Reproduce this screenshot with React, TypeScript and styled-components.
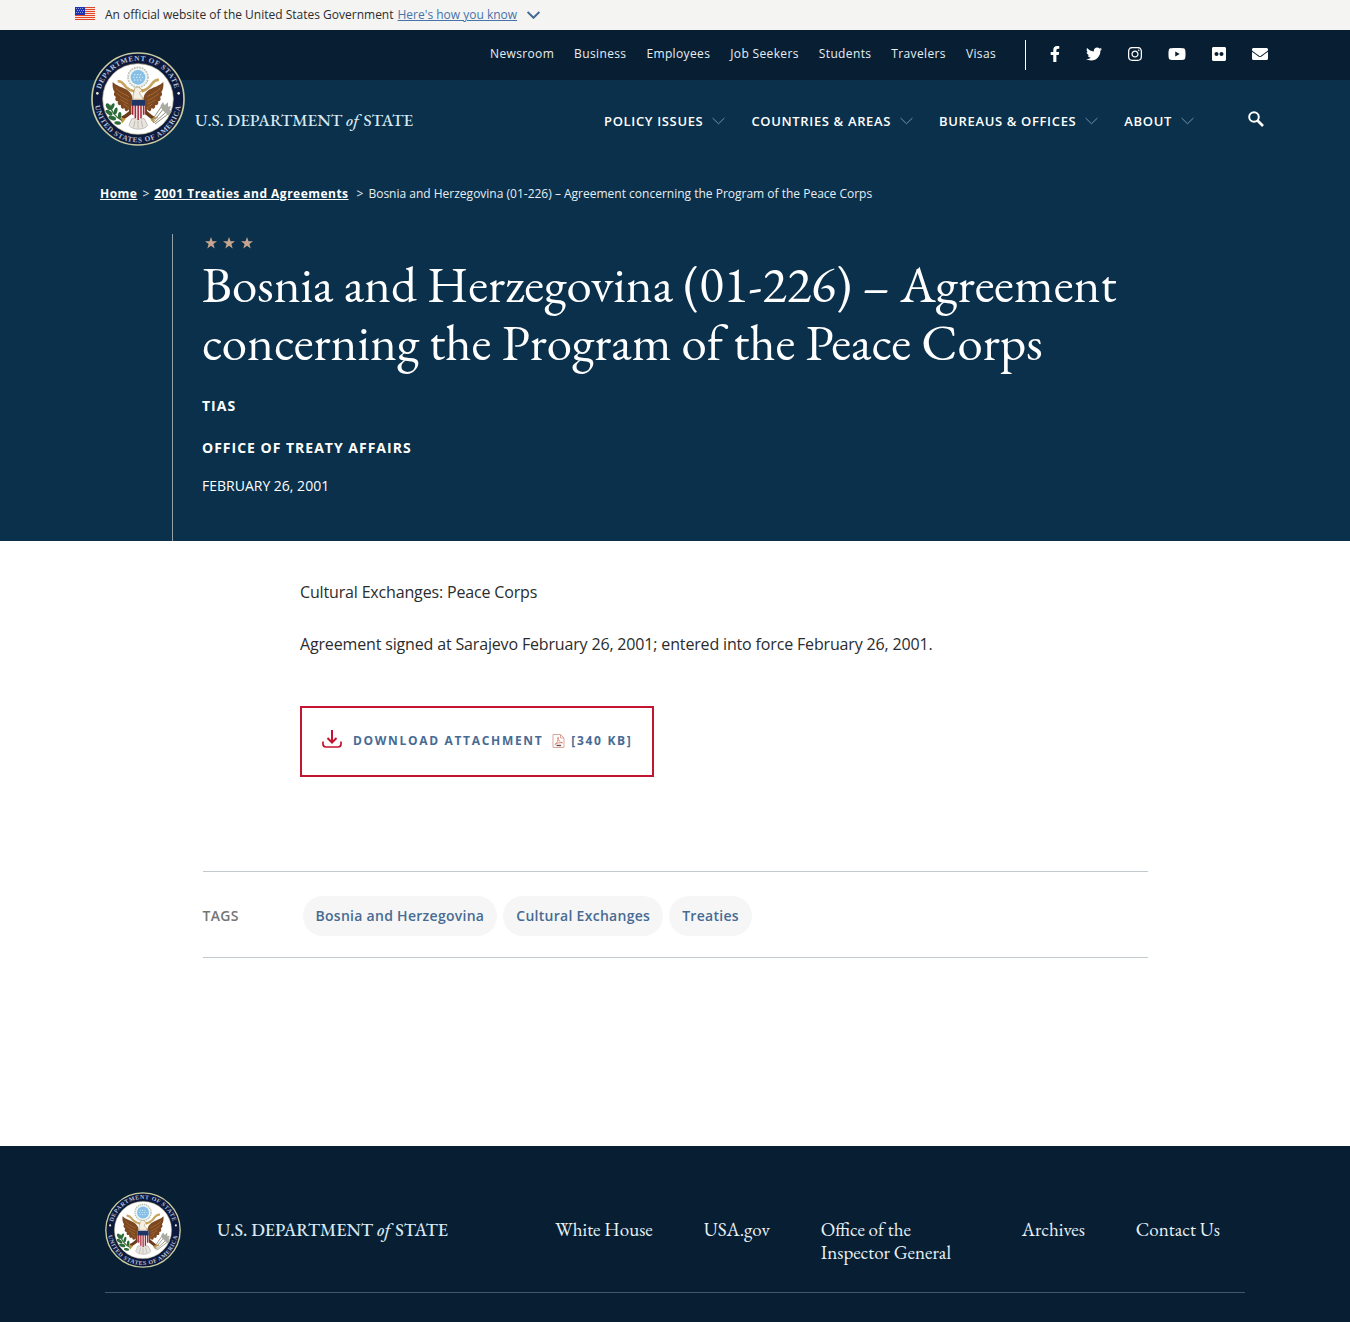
import React from "react";
import styled, { createGlobalStyle } from "styled-components";
import {
  FaEnvelope,
  FaFacebookF,
  FaFlickr,
  FaInstagram,
  FaTwitter,
  FaYoutube,
} from "react-icons/fa";

const color = {
  navy: "#081f33",
  blue: "#0a304b",
  link: "#4773aa",
  steel: "#476b93",
  red: "#c3152f",
  text: "#2a2c2e",
};

const sans = '"Open Sans", "Noto Sans", sans-serif';
const serif = '"EB Garamond", "Liberation Serif", serif';

const GlobalStyle = createGlobalStyle`
  *, *::before, *::after { box-sizing: border-box; }
  body {
    margin: 0;
    background: #fff;
    color: ${color.text};
    font-family: ${sans};
    font-size: 16px;
    line-height: 26px;
  }
  a { color: inherit; text-decoration: none; }
  ul, ol { list-style: none; margin: 0; padding: 0; }
  p, h1 { margin: 0; }
  svg { display: block; flex: none; }
`;

/* Government banner */

const Banner = styled.div`
  display: flex;
  align-items: center;
  height: 30px;
  padding: 0 75px;
  background: #f4f4f3;
  font-size: 12px;
  line-height: 16px;
`;

const FlagBox = styled.span`
  padding-bottom: 3px;
`;

const BannerText = styled.p`
  margin: 0 4px 0 10px;
`;

const BannerToggle = styled.button`
  display: flex;
  align-items: center;
  gap: 10px;
  padding: 0;
  border: 0;
  background: none;
  color: ${color.link};
  font: inherit;
  cursor: pointer;

  span { text-decoration: underline; }
`;

/* Header */

const Header = styled.header`
  display: grid;
  grid-template-columns: auto 1fr;
  grid-template-rows: 50px 82px;
  padding: 0 82px 0 91px;
  background: linear-gradient(${color.navy} 50px, ${color.blue} 50px);
  color: #fff;
`;

const Brand = styled.a`
  grid-row: 1 / 3;
  display: flex;
  align-items: flex-start;
  gap: 10px;
  padding-top: 22px;
`;

const Wordmark = styled.span<{ $size: number }>`
  font-family: ${serif};
  font-size: ${(p) => p.$size}px;
  font-weight: 500;
  line-height: 24px;
  color: #d8e8f2;
  white-space: nowrap;

  em { margin-right: 1px; }
`;

const HeaderWordmark = styled(Wordmark)`
  margin-top: 56px;
`;

const UtilityBar = styled.div`
  display: flex;
  align-items: center;
  justify-content: flex-end;
  font-size: 12px;
  line-height: 16px;
`;

const UtilityNav = styled.ul`
  display: flex;
  gap: 20px;
  margin-right: 29px;
  padding-bottom: 2px;
  letter-spacing: 0.03em;
  color: #e6eef4;
`;

const SocialNav = styled.ul`
  display: flex;
  align-items: center;
  gap: 26px;
  height: 30px;
  padding: 0 0 2px 24px;
  border-left: 1px solid #fff;
`;

const SocialLink = styled.a<{ $width: number }>`
  display: block;

  svg {
    width: ${(p) => p.$width}px;
    height: 16px;
  }
`;

const MainBar = styled.div`
  display: flex;
  align-items: center;
  justify-content: flex-end;
  padding-right: 4px;
`;

const MainNav = styled.ul`
  display: flex;
  gap: 26px;
  margin-right: 54px;
`;

const MenuButton = styled.button`
  display: flex;
  align-items: center;
  gap: 9px;
  padding: 0;
  border: 0;
  background: none;
  color: #fff;
  font-family: ${sans};
  font-size: 13px;
  font-weight: 600;
  line-height: 18px;
  letter-spacing: 0.05em;
  text-transform: uppercase;
  cursor: pointer;
`;

const SearchButton = styled.button`
  padding: 0 0 4px;
  border: 0;
  background: none;
  color: #fff;
  cursor: pointer;
`;

/* Hero */

const Hero = styled.section`
  padding-top: 23px;
  background: ${color.blue};
  color: #fff;
`;

const Crumbs = styled.ol`
  display: flex;
  gap: 5px;
  padding: 0 100px;
  font-size: 12px;
  line-height: 18px;
  color: #e6eef4;

  a {
    color: #fff;
    font-weight: 700;
    letter-spacing: 0.04em;
    text-decoration: underline;
  }
`;

const Crumb = styled.li`
  display: flex;
  gap: 5px;

  & + & { gap: 8px; }
`;

const HeroBody = styled.div`
  margin: 31px 15% 0 172px;
  padding: 2px 0 44px 29px;
  border-left: 1px solid #93a0a5;
`;

const Stars = styled.div`
  display: flex;
  gap: 6px;
  padding: 1px 3px;
  color: #c8a58f;
`;

const Title = styled.h1`
  margin: 5px 0 24px;
  font-family: ${serif};
  font-size: 51px;
  font-weight: 400;
  line-height: 58px;
`;

const Meta = styled.p`
  margin-bottom: 20px;
  font-size: 14px;
  font-weight: 700;
  line-height: 22px;
  letter-spacing: 1px;
  text-transform: uppercase;
`;

const DateLine = styled.p`
  margin-top: -4px;
  font-size: 14px;
  line-height: 22px;
  text-transform: uppercase;
`;

/* Article */

const Article = styled.main`
  padding: 38px 15% 94px 300px;
`;

const Paragraph = styled.p`
  margin-bottom: 26px;
  letter-spacing: -0.01em;
`;

const Download = styled.a`
  display: inline-flex;
  align-items: center;
  margin-top: 23px;
  padding: 19px 20px 21px;
  border: 2px solid ${color.red};
  color: ${color.steel};
  font-size: 12px;
  font-weight: 700;
  line-height: 27px;
  letter-spacing: 0.14em;
  text-transform: uppercase;
  vertical-align: top;

  svg:first-child { margin-bottom: 3px; }
`;

const DownloadText = styled.span`
  margin: 0 9px 0 11px;
`;

const FileSize = styled.span`
  margin-left: 6px;
`;

const Tags = styled.section`
  display: flex;
  align-items: center;
  margin: 0 15%;
  padding: 24px 0 21px;
  border: solid #c3cace;
  border-width: 1px 0;
  font-size: 14px;
  font-weight: 600;
  line-height: 20px;
  letter-spacing: 0.02em;
`;

const TagsLabel = styled.h2`
  width: 100px;
  margin: 0;
  color: #757575;
  font: inherit;
  text-transform: uppercase;
`;

const TagList = styled.ul`
  display: flex;
  flex-wrap: wrap;
  gap: 6px;
`;

const Tag = styled.a`
  display: block;
  padding: 10px 13px;
  border-radius: 20px;
  background: #f6f6f6;
  color: ${color.steel};
`;

/* Footer */

const Footer = styled.footer`
  margin-top: 188px;
  padding: 46px 105px 29px;
  background: ${color.navy};
  color: #e9f1f6;
`;

const FooterRow = styled.div`
  display: flex;
  align-items: flex-start;
  padding-bottom: 24px;
  border-bottom: 1px solid #40586b;
`;

const FooterBrand = styled.a`
  display: flex;
  align-items: center;
  gap: 36px;
`;

const FooterNav = styled.ul`
  display: flex;
  flex: 1;
  justify-content: flex-end;
  gap: 51px;
  margin: 26px 25px 0 0;
  font-family: ${serif};
  font-size: 19px;
  line-height: 23px;
`;

const FooterItem = styled.li`
  max-width: 150px;
`;

/* Drawings */

const Star = () => (
  <svg width="12" height="12" viewBox="0 0 12 12" aria-hidden="true">
    <path fill="currentColor" d="M6 0l1.500 4.300H12L8.400 7l1.300 4.500L6 8.800 2.300 11.500 3.600 7 0 4.300h4.500z" />
  </svg>
);

const Chevron = ({ stroke, width }: { stroke: string; width: number }) => (
  <svg width="13" height="8" viewBox="0 0 13 8" fill="none" aria-hidden="true">
    <path d="M.6 1l5.900 5.800L12.400 1" stroke={stroke} strokeWidth={width} />
  </svg>
);

const Flag = () => (
  <svg width="20" height="13" viewBox="0 0 20 13" role="img" aria-label="U.S. flag">
    <path fill="#fbe3dc" d="M0 0h20v13H0z" />
    <g fill="#e0452a">
      <path d="M0 0h20v1H0zM0 2h20v1H0zM0 4h20v1H0zM0 6h20v1H0z" />
      <path d="M0 8h20v1H0zM0 10h20v1H0zM0 12h20v1H0z" />
    </g>
    <path fill="#1e33b1" d="M0 0h10v8H0z" />
    <path
      stroke="#8f9de0"
      strokeWidth="1"
      strokeDasharray="1 1"
      d="M1 1.500h8M2 3.500h7M1 5.500h8"
    />
  </svg>
);

const SearchIcon = () => (
  <svg width="16" height="16" viewBox="0 0 16 16" fill="none" stroke="currentColor" aria-hidden="true">
    <circle cx="6" cy="6" r="4.800" strokeWidth="2" />
    <path d="M9.500 9.500l5.500 5.500" strokeWidth="2.600" />
  </svg>
);

const DownloadIcon = () => (
  <svg width="20" height="18" viewBox="0 0 20 18" fill="none" stroke={color.red} strokeWidth="2" aria-hidden="true">
    <path d="M10 0v12M5.500 8l4.500 4.500L14.500 8" />
    <path d="M1 11.500v2.500a3 3 0 0 0 3 3h12a3 3 0 0 0 3-3v-2.500" strokeWidth="1.700" />
  </svg>
);

const PdfIcon = () => (
  <svg width="13" height="14" viewBox="0 0 13 14" fill="none" aria-hidden="true">
    <path d="M1 .5h7.500l3.500 3.500v9.500H1z" fill="#fff" stroke="#dba79c" />
    <path d="M8.500.5v3.500H12" stroke="#dba79c" />
    <path d="M2.800 10.500c2.200-1.200 3.600-4.300 3.200-7.300 0 3 1.800 5.200 4.600 5.600-2.800-.4-5.300.1-7.800 1.700z" stroke="#e0806c" strokeWidth=".9" />
    <path d="M4.500 11.500h4.500" stroke="#6b4a48" strokeWidth="1.400" />
  </svg>
);

const Seal = ({ size, id }: { size: number; id: string }) => (
  <svg width={size} height={size} viewBox="0 0 282 282" role="img" aria-label="Department of State seal">
    <defs>
      <path id={`${id}-top`} d="M26 141a115 115 0 0 1 230 0" />
      <path id={`${id}-bottom`} d="M11 141a130 130 0 0 0 260 0" />
    </defs>
    <circle cx="141" cy="141" r="138" fill="#0e1a3d" stroke="#c9cba0" strokeWidth="5" />
    <circle cx="141" cy="141" r="106" fill="#fff" stroke="#b9b48b" strokeWidth="2" />
    <g fill="#b4c0dc" fontFamily='"Liberation Serif", serif' fontSize="22" fontWeight="700" textAnchor="middle" letterSpacing="2">
      <text>
        <textPath href={`#${id}-top`} startOffset="50%">DEPARTMENT OF STATE</textPath>
      </text>
      <text>
        <textPath href={`#${id}-bottom`} startOffset="50%">UNITED STATES OF AMERICA</textPath>
      </text>
    </g>
    <g fill="#e5ead2">
      <circle cx="19" cy="124" r="4" />
      <circle cx="263" cy="124" r="4" />
    </g>
    {/* glory of stars */}
    <circle cx="141" cy="76" r="30" fill="#eef3f6" stroke="#b9bfae" strokeWidth="5" strokeDasharray="5 3" />
    <circle cx="141" cy="76" r="22" fill="#86bfe6" />
    <path d="M129 68h24M126 76h30M129 84h24" stroke="#e3f2fb" strokeWidth="3" strokeDasharray="4 5" />
    {/* motto ribbon */}
    <path
      d="M80 88c14-2 18 10 26 18s16 10 24 12M204 84c-16-2-20 12-28 20s-16 12-24 14"
      fill="none"
      stroke="#c6a55e"
      strokeWidth="8"
    />
    {/* wings */}
    <g fill="#7d4720">
      <path d="M65 90c12 12 26 14 40 22 14 8 20 18 20 36v32c-7 6-12-2-12-8-6 10-13 5-12-4-8 6-13-1-11-9-8 3-12-4-9-11-8 0-10-7-6-13-7-3-8-10-4-15-6-7-7-18-6-30z" />
      <path d="M217 90c-12 12-26 14-40 22-14 8-20 18-20 36v32c7 6 12-2 12-8 6 10 13 5 12-4 8 6 13-1 11-9 8 3 12-4 9-11 8 0 10-7 6-13 7-3 8-10 4-15 6-7 7-18 6-30z" />
    </g>
    <g fill="none" stroke="#b27a3e" strokeWidth="2">
      <path d="M74 108c10 12 24 18 40 26M78 124c10 10 20 14 34 22M88 142c8 6 16 10 24 14M98 156l16 12" />
      <path d="M208 108c-10 12-24 18-40 26M204 124c-10 10-20 14-34 22M194 142c-8 6-16 10-24 14M184 156l-16 12" />
    </g>
    {/* neck and head */}
    <path d="M126 142c-2-14 4-22 4-28 0-8 8-11 14-8 6 3 6 7 10 9-4 4-8 3-8 8 0 6 10 10 10 19z" fill="#f3efe3" stroke="#a88a55" strokeWidth="2" />
    <path d="M150 110l9 4-8 4z" fill="#d59b2f" />
    {/* tail and legs */}
    <path d="M122 200l-8 20c8 14 46 16 56 0l-10-20z" fill="#e8e4de" stroke="#a9a49d" strokeWidth="2" />
    <path d="M132 206l-4 20M141 206v22M151 206l4 20" stroke="#a9a49d" strokeWidth="2" />
    <path d="M120 180c-8 6-16 16-28 18M163 180c8 6 16 14 26 20" fill="none" stroke="#6b3c1b" strokeWidth="11" />
    <path d="M82 196l18 6-8 10M200 196l-18 6 8 10" fill="none" stroke="#d09a35" strokeWidth="5" />
    {/* shield */}
    <path d="M121 144h41v34c0 14-10 20-20.500 27C131 198 121 192 121 178z" fill="#f4e9e9" />
    <path d="M125 158v30M133 158v41M141.500 158v46M150 158v41M158 158v30" stroke="#a5283a" strokeWidth="4.500" />
    <path d="M121 144h41v17h-41z" fill="#1e3567" />
    {/* olive branch */}
    <path d="M56 158c4 18 14 36 38 48" fill="none" stroke="#3c6b35" strokeWidth="4" />
    <g fill="#2c6a3a">
      <ellipse cx="52" cy="164" rx="6" ry="11" transform="rotate(-30 52 164)" />
      <ellipse cx="64" cy="164" rx="5" ry="11" transform="rotate(25 64 164)" />
      <ellipse cx="54" cy="182" rx="6" ry="12" transform="rotate(-55 54 182)" />
      <ellipse cx="74" cy="177" rx="5" ry="11" transform="rotate(15 74 177)" />
      <ellipse cx="64" cy="198" rx="6" ry="12" transform="rotate(-70 64 198)" />
      <ellipse cx="86" cy="190" rx="5" ry="10" transform="rotate(5 86 190)" />
      <ellipse cx="80" cy="213" rx="5" ry="10" transform="rotate(-80 80 213)" />
    </g>
    {/* arrows */}
    <path
      d="M186 210l40-50M190 212l44-40M182 206l32-46M192 216l42-32"
      fill="none"
      stroke="#8f8d7c"
      strokeWidth="3"
    />
    <path d="M208 162l8-12 5 10 10-9 0 13 9-2-4 12 6 4-9 12c-8-4-20-16-25-28z" fill="#a9aaa2" />
  </svg>
);

/* Content */

const utilityLinks = ["Newsroom", "Business", "Employees", "Job Seekers", "Students", "Travelers", "Visas"];

const socialLinks = [
  { label: "Facebook", Icon: FaFacebookF, width: 10 },
  { label: "Twitter", Icon: FaTwitter, width: 16 },
  { label: "Instagram", Icon: FaInstagram, width: 14 },
  { label: "YouTube", Icon: FaYoutube, width: 18 },
  { label: "Flickr", Icon: FaFlickr, width: 14 },
  { label: "Email", Icon: FaEnvelope, width: 16 },
];

const menus = ["Policy Issues", "Countries & Areas", "Bureaus & Offices", "About"];
const tags = ["Bosnia and Herzegovina", "Cultural Exchanges", "Treaties"];
const footerLinks = ["White House", "USA.gov", "Office of the Inspector General", "Archives", "Contact Us"];

const DepartmentName = () => (
  <>
    U.S. DEPARTMENT <em>of</em> STATE
  </>
);

export default function App() {
  return (
    <>
      <GlobalStyle />
      <Banner>
        <FlagBox>
          <Flag />
        </FlagBox>
        <BannerText>An official website of the United States Government</BannerText>
        <BannerToggle type="button">
          <span>Here's how you know</span>
          <Chevron stroke="#476b93" width={2} />
        </BannerToggle>
      </Banner>

      <Header>
        <Brand href="#">
          <Seal size={94} id="header-seal" />
          <HeaderWordmark $size={17}>
            <DepartmentName />
          </HeaderWordmark>
        </Brand>
        <UtilityBar>
          <UtilityNav>
            {utilityLinks.map((label) => (
              <li key={label}>
                <a href="#">{label}</a>
              </li>
            ))}
          </UtilityNav>
          <SocialNav>
            {socialLinks.map(({ label, Icon, width }) => (
              <li key={label}>
                <SocialLink href="#" aria-label={label} $width={width}>
                  <Icon />
                </SocialLink>
              </li>
            ))}
          </SocialNav>
        </UtilityBar>
        <MainBar>
          <MainNav>
            {menus.map((label) => (
              <li key={label}>
                <MenuButton type="button">
                  {label}
                  <Chevron stroke="#6f93ad" width={1} />
                </MenuButton>
              </li>
            ))}
          </MainNav>
          <SearchButton type="button" aria-label="Search">
            <SearchIcon />
          </SearchButton>
        </MainBar>
      </Header>

      <Hero>
        <Crumbs>
          <Crumb>
            <a href="#">Home</a>
            <span>&gt;</span>
          </Crumb>
          <Crumb>
            <a href="#">2001 Treaties and Agreements</a>
            <span>&gt;</span>
          </Crumb>
          <Crumb>Bosnia and Herzegovina (01-226) – Agreement concerning the Program of the Peace Corps</Crumb>
        </Crumbs>
        <HeroBody>
          <Stars>
            <Star />
            <Star />
            <Star />
          </Stars>
          <Title>Bosnia and Herzegovina (01-226) – Agreement concerning the Program of the Peace Corps</Title>
          <Meta>TIAS</Meta>
          <Meta>Office of Treaty Affairs</Meta>
          <DateLine>February 26, 2001</DateLine>
        </HeroBody>
      </Hero>

      <Article>
        <Paragraph>Cultural Exchanges: Peace Corps</Paragraph>
        <Paragraph>
          Agreement signed at Sarajevo February 26, 2001; entered into force February 26, 2001.
        </Paragraph>
        <Download href="#">
          <DownloadIcon />
          <DownloadText>Download Attachment</DownloadText>
          <PdfIcon />
          <FileSize>[340 KB]</FileSize>
        </Download>
      </Article>

      <Tags>
        <TagsLabel>Tags</TagsLabel>
        <TagList>
          {tags.map((label) => (
            <li key={label}>
              <Tag href="#">{label}</Tag>
            </li>
          ))}
        </TagList>
      </Tags>

      <Footer>
        <FooterRow>
          <FooterBrand href="#">
            <Seal size={76} id="footer-seal" />
            <Wordmark $size={18}>
              <DepartmentName />
            </Wordmark>
          </FooterBrand>
          <FooterNav>
            {footerLinks.map((label) => (
              <FooterItem key={label}>
                <a href="#">{label}</a>
              </FooterItem>
            ))}
          </FooterNav>
        </FooterRow>
      </Footer>
    </>
  );
}
